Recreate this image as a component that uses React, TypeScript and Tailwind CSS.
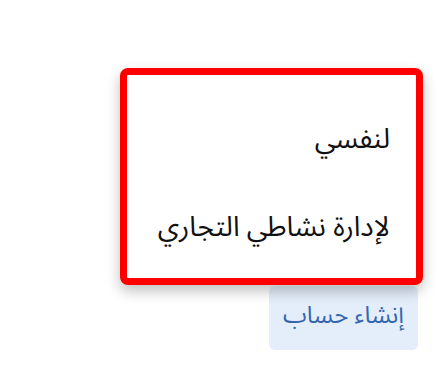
import { useState } from "react";

const OPTIONS = ["لنفسي", "لإدارة نشاطي التجاري"];

export default function App() {
  const [open] = useState(true);

  return (
    <div
      dir="rtl"
      className="relative h-[391px] w-[448px] bg-white"
      style={{ fontFamily: '"Noto Sans Arabic", "Noto Sans", "DejaVu Sans", sans-serif' }}
    >
      <div className="flex justify-start pr-[30px] pt-[286px]">
        <button className="flex h-[64px] w-[149px] items-center justify-center rounded-md bg-[#e4edfa] pb-[4px] text-[24px] text-[#3466b0]">
          إنشاء حساب
        </button>
      </div>

      {open && (
        <div className="absolute left-[120px] top-[68px] h-[217px] w-[303px] rounded-lg border-[7px] border-[#ff0000] bg-white shadow-[0_6px_14px_rgba(0,0,0,0.25)]">
          <ul className="flex flex-col pr-[26px] pt-[21px]">
            {OPTIONS.map((option) => (
              <li
                key={option}
                className="flex h-[88px] items-center text-[28px] leading-[38px] text-[#111]"
              >
                {option}
              </li>
            ))}
          </ul>
        </div>
      )}
    </div>
  );
}
